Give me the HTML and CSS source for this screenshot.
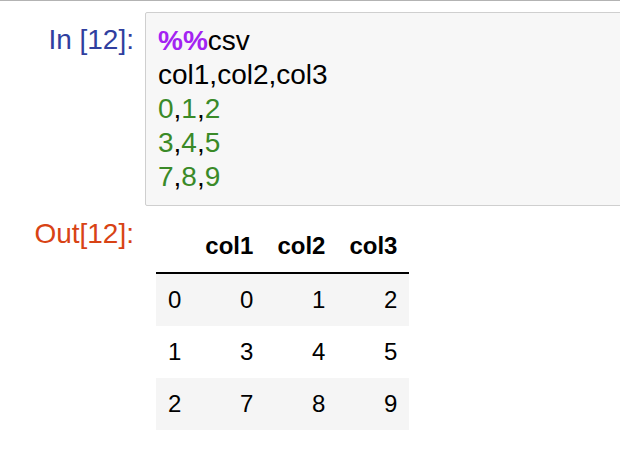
FILE: index.html
```html
<!DOCTYPE html>
<html>
<head>
<meta charset="utf-8">
<link rel="stylesheet" href="styles.css">
</head>
<body>
<div class="cell">
  <div class="row">
    <div class="prompt in-prompt">In&nbsp;[12]:</div>
    <div class="input-area"><pre class="code"><span class="magic">%%</span>csv
col1,col2,col3
<span class="num">0</span>,<span class="num">1</span>,<span class="num">2</span>
<span class="num">3</span>,<span class="num">4</span>,<span class="num">5</span>
<span class="num">7</span>,<span class="num">8</span>,<span class="num">9</span></pre></div>
  </div>
  <div class="row">
    <div class="prompt out-prompt">Out[12]:</div>
    <div class="output-sub">
      <table class="frame">
        <thead>
          <tr><th></th><th>col1</th><th>col2</th><th>col3</th></tr>
        </thead>
        <tbody>
          <tr><th>0</th><td>0</td><td>1</td><td>2</td></tr>
          <tr><th>1</th><td>3</td><td>4</td><td>5</td></tr>
          <tr><th>2</th><td>7</td><td>8</td><td>9</td></tr>
        </tbody>
      </table>
    </div>
  </div>
</div>
</body>
</html>
```

FILE: styles.css
```css
html, body {
  margin: 0;
  padding: 0;
  background: #ffffff;
  overflow: hidden;
}
body {
  width: 620px;
  height: 452px;
  font-family: "Liberation Sans", Arial, sans-serif;
}
.cell {
  border-top: 1px solid #b3b3b3;
  border-bottom: 1px solid #b3b3b3;
  padding-top: 11px;
}
.row {
  display: flex;
  align-items: flex-start;
}
.prompt {
  flex: 0 0 auto;
  width: 145px;
  box-sizing: border-box;
  padding: 11px 11px 11px 0;
  text-align: right;
  font-size: 28px;
  line-height: 34px;
  white-space: nowrap;
}
.in-prompt { color: #303f9f; }
.out-prompt { color: #d84315; }
.input-area {
  flex: 1 1 auto;
  margin-right: -12px;
  background: #f7f7f7;
  border: 1px solid #cfcfcf;
  border-radius: 2px;
}
.code {
  margin: 0;
  padding: 11px 12px;
  font-family: "Liberation Sans", Arial, sans-serif;
  font-size: 28px;
  line-height: 34px;
  color: #000;
  white-space: pre;
}
.magic {
  color: #a323f2;
  font-weight: bold;
}
.num { color: #3a8a28; }
.output-sub {
  flex: 1 1 auto;
  padding: 14px 11px 22px 11px;
}
.frame {
  border-collapse: collapse;
  border-spacing: 0;
  font-size: 24px;
  color: #000;
}
.frame th, .frame td {
  padding: 12px 12px;
  line-height: 28px;
  text-align: right;
  vertical-align: middle;
}
.frame thead th {
  font-weight: bold;
  border-bottom: 2px solid #000;
}
.frame tbody th {
  font-weight: normal;
}
.frame tbody tr:nth-child(odd) {
  background: #f5f5f5;
}
```
